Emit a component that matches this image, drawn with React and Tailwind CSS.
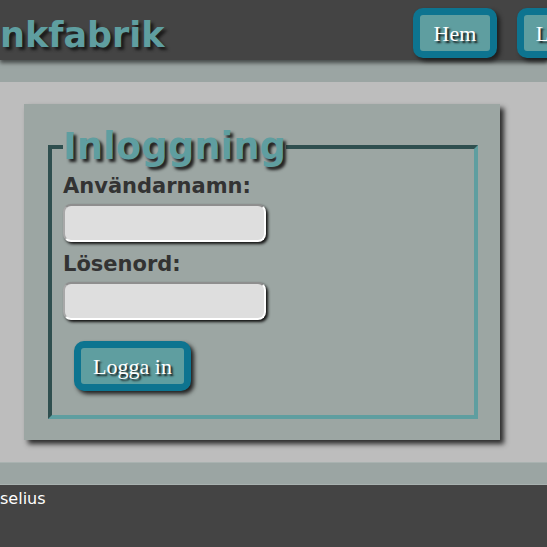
import React from "react";

const sans = "font-['DejaVu_Sans','Verdana',sans-serif]";
const serif = "font-['Liberation_Serif','Georgia',serif]";

function NavButton({ label, width }) {
  return (
    <button
      className={`${serif} flex h-[50px] shrink-0 items-center justify-center rounded-[10px] border-[7px] border-[#0d7490] bg-[#5f9ea0] text-[22px] text-white shadow-[3px_3px_4px_#1e1e1e] [text-shadow:2px_2px_2px_#111] ${width}`}
    >
      {label}
    </button>
  );
}

function Field({ label, top }) {
  return (
    <>
      <label className={`${sans} block text-[21px] font-bold leading-[23px] text-[#333] ${top}`}>{label}</label>
      <input
        type="text"
        className="mt-[6px] block h-[38px] w-[203px] rounded-[8px] border-2 border-t-[#8e8e8e] border-l-[#a8a8a8] border-b-white border-r-white bg-[#dedede] shadow-[2px_2px_3px_#111] outline-none"
      />
    </>
  );
}

export default function App() {
  return (
    <div className="flex min-h-[547px] w-[547px] flex-col overflow-hidden bg-[#444]">
      {/* header */}
      <header className="relative z-10 flex h-[60px] shrink-0 bg-[#444] shadow-[0_3px_4px_rgba(0,0,0,0.55)]">
        <div className="w-[413px] shrink-0">
          <h1
            className={`${sans} mt-[15px] text-[35px] font-bold leading-[41px] text-[#5f9ea0] [text-shadow:3px_3px_3px_#1a1a1a]`}
          >
            nkfabrik
          </h1>
        </div>
        <nav className="mt-[8px] flex shrink-0 items-start gap-[20px]">
          <NavButton label="Hem" width="w-[84px]" />
          <NavButton label="Länkar" width="w-[100px]" />
        </nav>
      </header>

      <div className="h-[22px] shrink-0 bg-[#9ba5a3]" />

      {/* main */}
      <main className="shrink-0 bg-[#bdbdbd] px-[24px] py-[22px]">
        <div className="w-[476px] bg-[#9ca6a3] pb-[21px] pl-[24px] pr-[22px] pt-[22px] shadow-[4px_4px_5px_#2c2c2c]">
          <form onSubmit={(e) => e.preventDefault()}>
            <fieldset className="border-4 border-t-[#2f4f4f] border-l-[#2f4f4f] border-b-[#5f9ea0] border-r-[#5f9ea0] px-[11px] pb-[24px]">
              <legend
                className={`${sans} text-[37px] font-bold leading-[42px] text-[#5f9ea0] [text-shadow:3px_3px_3px_#222]`}
              >
                Inloggning
              </legend>
              <Field label="Användarnamn:" top="mt-[7px]" />
              <Field label="Lösenord:" top="mt-[11px]" />
              <div className="ml-[11px] mt-[21px]">
                <NavButton label="Logga in" width="w-[117px]" />
              </div>
            </fieldset>
          </form>
        </div>
      </main>

      <div className="h-[22px] shrink-0 border-t border-[#a9b2b0] bg-[#9ba5a3]" />

      {/* footer */}
      <footer className={`${sans} flex-1 border-t border-[#a9b2b0] bg-[#444] pt-[2px] text-[16px] text-white`}>
        selius
      </footer>
    </div>
  );
}
